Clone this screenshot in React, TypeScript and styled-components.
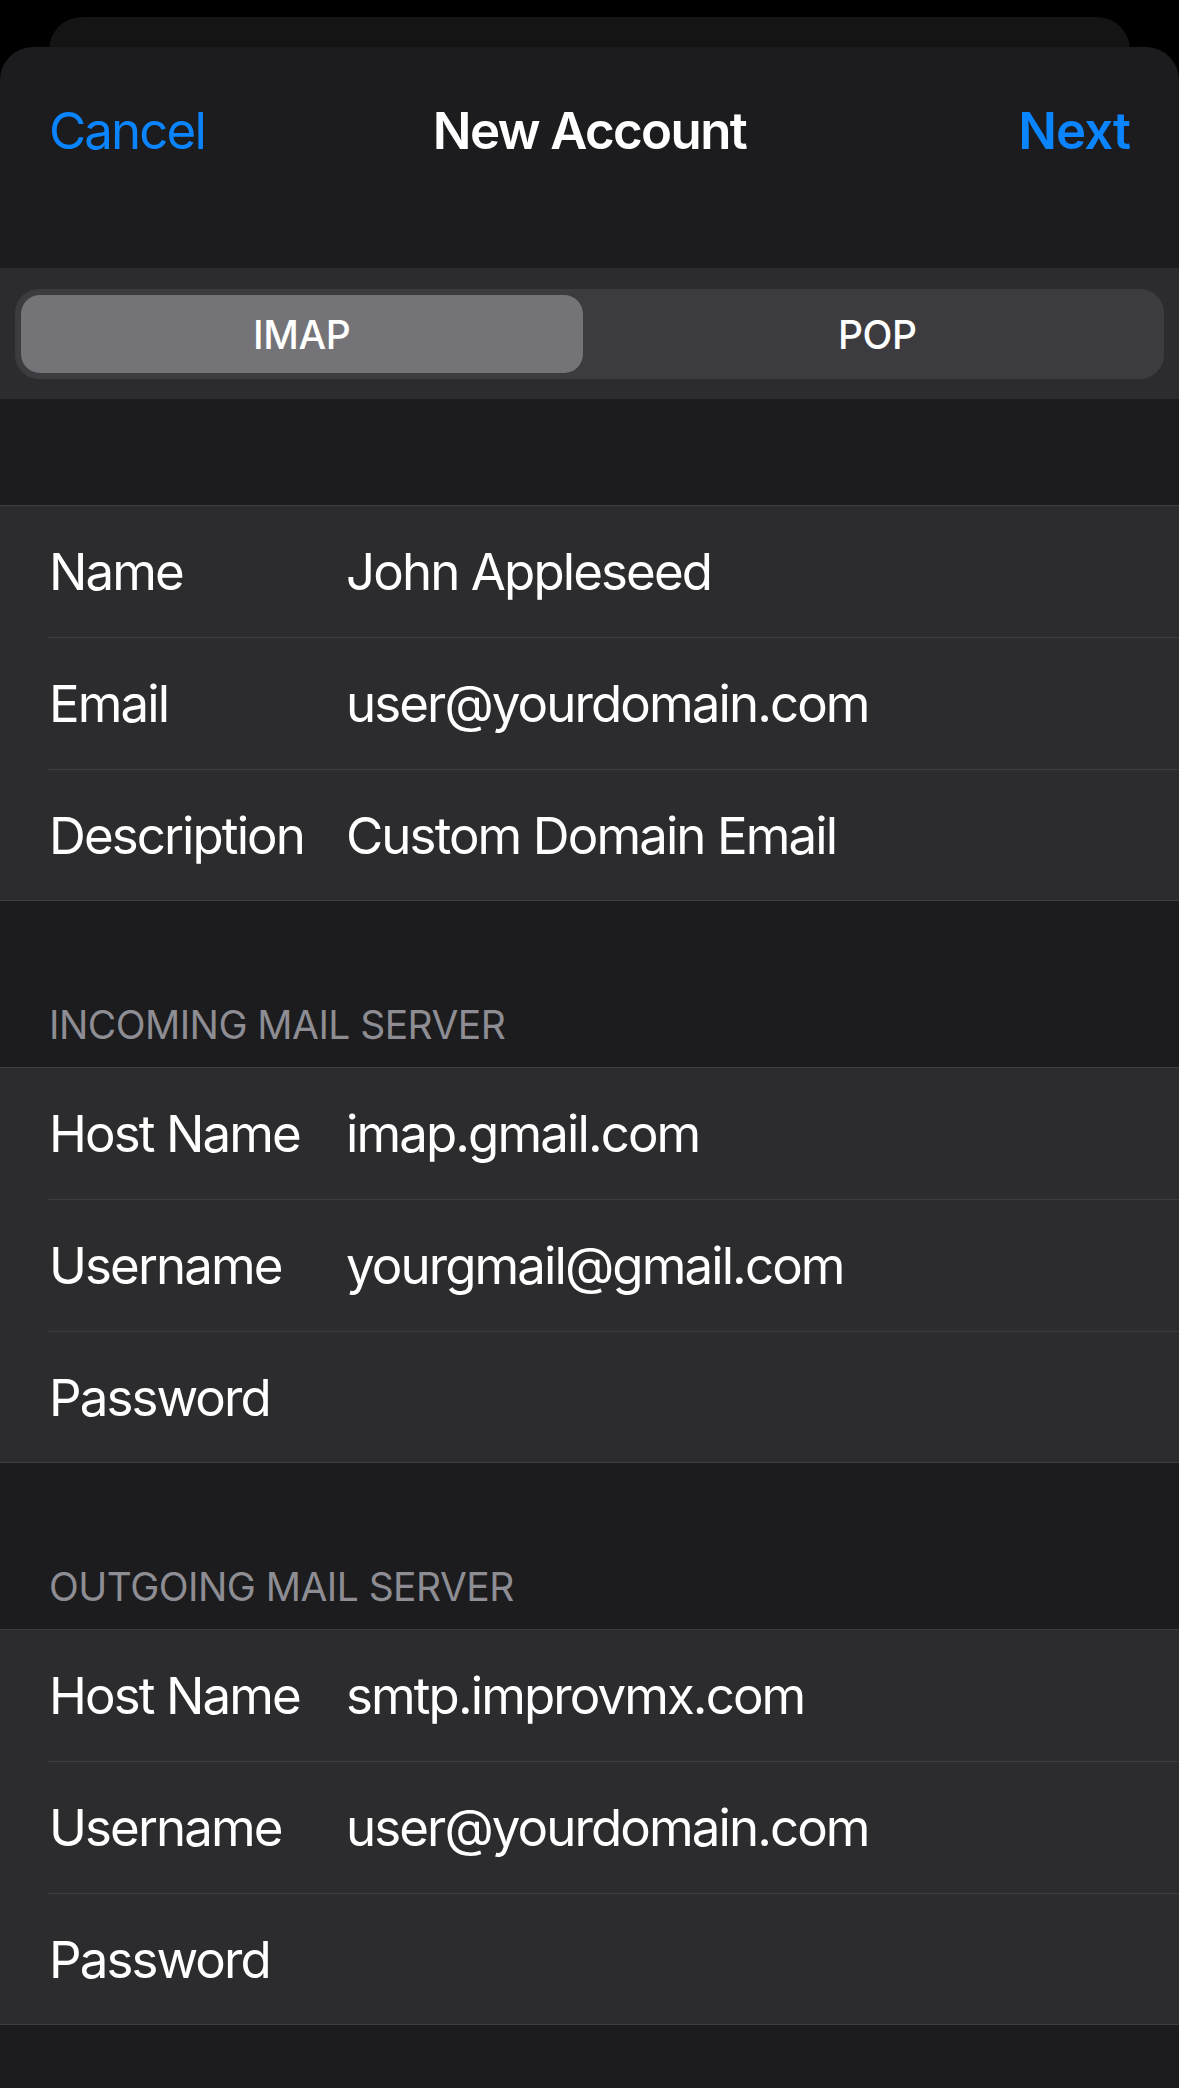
import * as React from "react";
import styled, { createGlobalStyle } from "styled-components";

const GlobalStyle = createGlobalStyle`
  html, body {
    margin: 0;
    padding: 0;
    background: #000;
  }
  body {
    font-family: Inter, "Liberation Sans", sans-serif;
    -webkit-font-smoothing: antialiased;
  }
`;

const Screen = styled.div`
  min-height: 100vh;
  display: flex;
  flex-direction: column;
  padding-top: 17px;
  box-sizing: border-box;
  overflow: hidden;
`;

const BackCard = styled.div`
  height: 60px;
  margin: 0 49px -30px;
  border-radius: 33px 33px 0 0;
  background: #141415;
`;

const Sheet = styled.div`
  position: relative;
  flex: 1;
  background: #1c1c1e;
  border-radius: 33px 33px 0 0;
  display: flex;
  flex-direction: column;
`;

const NavBar = styled.div`
  height: 167px;
  display: grid;
  grid-template-columns: 1fr auto 1fr;
  align-items: center;
  padding: 0 49px;
`;

const NavButton = styled.span<{ $bold?: boolean; $end?: boolean }>`
  font-size: 51px;
  line-height: 51px;
  color: #0a84ff;
  font-weight: ${(p) => (p.$bold ? 600 : 400)};
  letter-spacing: ${(p) => (p.$bold ? "-1px" : "-1.9px")};
  justify-self: ${(p) => (p.$end ? "end" : "start")};
`;

const Title = styled.span`
  font-size: 51px;
  line-height: 51px;
  font-weight: 600;
  color: #fff;
  letter-spacing: -1.6px;
`;

const SegmentBar = styled.div`
  margin-top: 54px;
  height: 131px;
  background: #2c2c2e;
  padding: 21px 15px 20px;
  box-sizing: border-box;
`;

const Segmented = styled.div`
  height: 90px;
  border-radius: 24px;
  background: #3c3b40;
  padding: 6px;
  box-sizing: border-box;
  display: grid;
  grid-template-columns: 1fr 1fr;
  column-gap: 14px;
`;

const Segment = styled.div<{ $active?: boolean }>`
  display: flex;
  align-items: center;
  justify-content: center;
  border-radius: 19px;
  background: ${(p) => (p.$active ? "#747378" : "transparent")};
  color: #fff;
  font-size: 39px;
  line-height: 39px;
  font-weight: 500;
  letter-spacing: -0.4px;
`;

const SectionHeader = styled.div<{ $first?: boolean }>`
  padding: ${(p) => (p.$first ? "106px 49px 0" : "104px 49px 23px")};
  height: ${(p) => (p.$first ? "0" : "auto")};
  font-size: 39px;
  line-height: 39px;
  color: #8d8d93;
  letter-spacing: -0.55px;
  text-transform: uppercase;
`;

const Group = styled.div`
  background: #2c2c2e;
  border-top: 1px solid #3d3d41;
  border-bottom: 1px solid #3d3d41;
`;

const Row = styled.div`
  height: 131px;
  margin-left: 48px;
  display: grid;
  grid-template-columns: 298px 1fr;
  align-items: center;
  border-bottom: 1px solid #3d3d41;
  &:last-child {
    height: 130px;
    border-bottom: none;
  }
`;

const Label = styled.span`
  padding-left: 1px;
  font-size: 51px;
  line-height: 51px;
  color: #fff;
  letter-spacing: -1.9px;
`;

const Value = styled.span`
  font-size: 51px;
  line-height: 51px;
  color: #fff;
  letter-spacing: -1.9px;
`;

type Field = { label: string; value?: string };

const sections: { title?: string; fields: Field[] }[] = [
  {
    fields: [
      { label: "Name", value: "John Appleseed" },
      { label: "Email", value: "user@yourdomain.com" },
      { label: "Description", value: "Custom Domain Email" },
    ],
  },
  {
    title: "Incoming Mail Server",
    fields: [
      { label: "Host Name", value: "imap.gmail.com" },
      { label: "Username", value: "yourgmail@gmail.com" },
      { label: "Password" },
    ],
  },
  {
    title: "Outgoing Mail Server",
    fields: [
      { label: "Host Name", value: "smtp.improvmx.com" },
      { label: "Username", value: "user@yourdomain.com" },
      { label: "Password" },
    ],
  },
];

export default function App() {
  const [mode, setMode] = React.useState<"imap" | "pop">("imap");
  return (
    <Screen>
      <GlobalStyle />
      <BackCard />
      <Sheet>
        <NavBar>
          <NavButton>Cancel</NavButton>
          <Title>New Account</Title>
          <NavButton $bold $end>
            Next
          </NavButton>
        </NavBar>
        <SegmentBar>
          <Segmented>
            <Segment $active={mode === "imap"} onClick={() => setMode("imap")}>
              IMAP
            </Segment>
            <Segment $active={mode === "pop"} onClick={() => setMode("pop")}>
              POP
            </Segment>
          </Segmented>
        </SegmentBar>
        {sections.map((s, i) => (
          <React.Fragment key={i}>
            <SectionHeader $first={!s.title}>{s.title}</SectionHeader>
            <Group>
              {s.fields.map((f) => (
                <Row key={f.label}>
                  <Label>{f.label}</Label>
                  <Value>{f.value}</Value>
                </Row>
              ))}
            </Group>
          </React.Fragment>
        ))}
      </Sheet>
    </Screen>
  );
}
